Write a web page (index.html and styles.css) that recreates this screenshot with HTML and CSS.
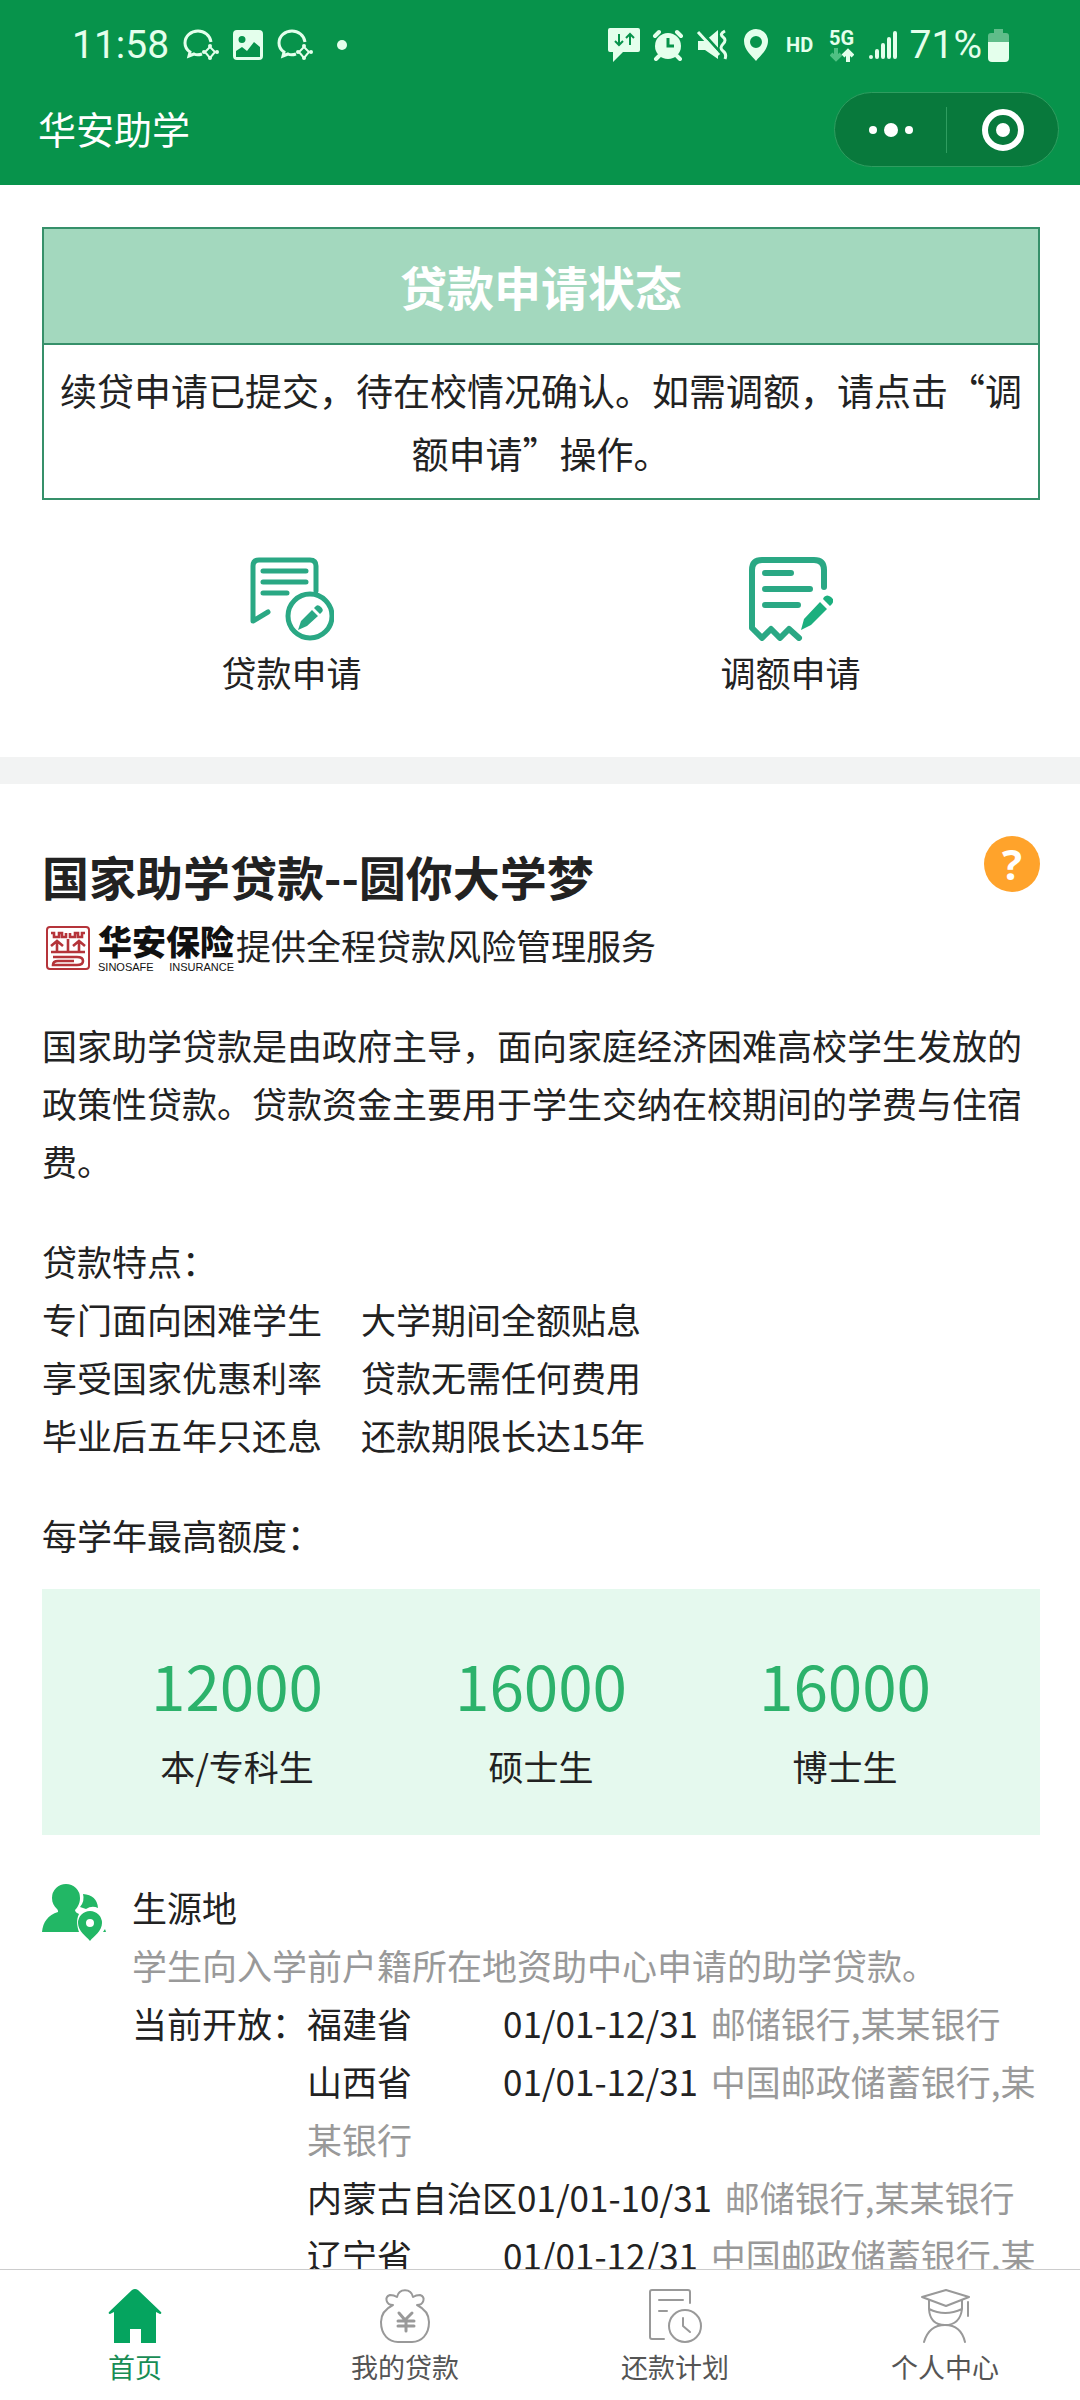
FILE: index.html
```html
<!doctype html>
<html lang="zh-CN">
    <head>
        <meta charset="utf-8">
        <title>华安助学</title>
        <meta name="viewport" content="width=device-width, initial-scale=1">

        <link rel="stylesheet" href="styles.css">
    </head>
    <body>
        <header class="header">
            <div class="status">
                <div class="status-left">
                    <span class="clock">11:58</span>
                    <svg class="bubble" width="36" height="32" viewBox="0 0 36 32" fill="none" stroke="currentColor" stroke-width="3">
                        <path d="M28 13C27 6 21 2 15 2 8 2 2 7 2 14c0 4 2 7 5 9l-1 4 5-2c2 1 5 1 8 0"/>
                        <path d="M27 18l5 5-5 6-5-6z" stroke-width="2"/>
                        <g fill="currentColor" stroke="none"><circle cx="27" cy="17" r="2"/><circle cx="34" cy="23" r="2"/><circle cx="27" cy="29" r="2"/><circle cx="21" cy="23" r="2"/></g>
                    </svg>
                    <svg width="30" height="30" viewBox="0 0 30 30">
                        <path fill="currentColor" fill-rule="evenodd" d="M4 0h22a4 4 0 0 1 4 4v22a4 4 0 0 1-4 4H4a4 4 0 0 1-4-4V4a4 4 0 0 1 4-4zM9 6a3 3 0 1 0 0 7 3 3 0 0 0 0-7zM3 21v6h24V17l-6-5-7 9-5-4z"/>
                    </svg>
                    <svg class="bubble" width="36" height="32" viewBox="0 0 36 32" fill="none" stroke="currentColor" stroke-width="3">
                        <path d="M28 13C27 6 21 2 15 2 8 2 2 7 2 14c0 4 2 7 5 9l-1 4 5-2c2 1 5 1 8 0"/>
                        <path d="M27 18l5 5-5 6-5-6z" stroke-width="2"/>
                        <g fill="currentColor" stroke="none"><circle cx="27" cy="17" r="2"/><circle cx="34" cy="23" r="2"/><circle cx="27" cy="29" r="2"/><circle cx="21" cy="23" r="2"/></g>
                    </svg>
                    <span class="more-dot"></span>
                </div>
                <div class="status-right">
                    <svg width="32" height="34" viewBox="0 0 32 34">
                        <path fill="currentColor" d="M2 0h28a2 2 0 0 1 2 2v20a2 2 0 0 1-2 2H15L5 34V24H2a2 2 0 0 1-2-2V2a2 2 0 0 1 2-2z"/>
                        <path fill="none" stroke="#07934b" stroke-width="2" d="M11 6v11M7 13l4 4 4-4M22 17V6m-4 4l4-4 4 4"/>
                    </svg>
                    <svg width="32" height="32" viewBox="0 0 32 32">
                        <circle cx="16" cy="17" r="13" fill="currentColor"/>
                        <path fill="none" stroke="currentColor" stroke-width="4" stroke-linecap="round" d="M3 7l4-4M29 7l-4-4M7 27l-3 3M25 27l3 3"/>
                        <path fill="none" stroke="#07934b" stroke-width="3" d="M16 9v8h6"/>
                    </svg>
                    <svg width="32" height="32" viewBox="0 0 32 32">
                        <path fill="currentColor" d="M2 12h7L22 1v29L9 21H2z"/>
                        <path stroke="#07934b" stroke-width="3" d="M4 1l19 21"/>
                        <path stroke="currentColor" stroke-width="3" d="M2 3l21 23"/>
                        <path fill="none" stroke="currentColor" stroke-width="3" d="M29 2q-6 3-2 6t0 7 0 7 2 8"/>
                    </svg>
                    <svg width="32" height="32" viewBox="0 0 32 32">
                        <path fill="currentColor" fill-rule="evenodd" d="M16 0a12 12 0 0 1 12 12c0 9-8 15-12 20C12 27 4 21 4 12A12 12 0 0 1 16 0zm0 7a6 6 0 1 0 0 12 6 6 0 0 0 0-12z"/>
                    </svg>
                    <span class="hd">HD</span>
                    <span class="network">
                        5G
                        <svg width="24" height="14" viewBox="0 0 24 14" fill="none" stroke-width="4">
                            <path stroke="#4fc083" d="M6 0v11M1 6l5 5 5-5"/>
                            <path stroke="currentColor" d="M18 14V3m-5 5l5-5 5 5"/>
                        </svg>
                    </span>
                    <svg width="30" height="28" viewBox="0 0 30 28" stroke="currentColor" stroke-width="4" stroke-linecap="round">
                        <path d="M3 26v0M9 20v6M15 14v12M21 8v18M27 2v24"/>
                    </svg>
                    <span class="battery">
                        71%
                        <svg width="21" height="33" viewBox="0 0 21 33">
                            <path fill="#5fbd8a" d="M6 0h9v4h3a3 3 0 0 1 3 3v7H0V7a3 3 0 0 1 3-3h3z"/>
                            <path fill="currentColor" d="M0 13h21v16a4 4 0 0 1-4 4H4a4 4 0 0 1-4-4z"/>
                        </svg>
                    </span>
                </div>
            </div>
            <div class="titlebar">
                <h1 class="app-title">华安助学</h1>
                <div class="capsule">
                    <button type="button" class="capsule-button" aria-label="更多">
                        <svg width="46" height="16" viewBox="0 0 46 16" fill="#fff">
                            <circle cx="5" cy="8" r="4"/><circle cx="23" cy="8" r="7"/><circle cx="41" cy="8" r="4"/>
                        </svg>
                    </button>
                    <button type="button" class="capsule-button" aria-label="关闭">
                        <svg width="42" height="42" viewBox="0 0 42 42">
                            <circle cx="21" cy="21" r="18" fill="none" stroke="#fff" stroke-width="6"/>
                            <circle cx="21" cy="21" r="7" fill="#fff"/>
                        </svg>
                    </button>
                </div>
            </div>
        </header>

        <main class="content">
            <section class="apply">
                <div class="card">
                    <h2 class="card-title">贷款申请状态</h2>
                    <p class="card-text">续贷申请已提交，待在校情况确认。如需调额，请点击“调额申请”操作。</p>
                </div>
                <div class="actions">
                    <a class="action" href="#loan">
                        <svg width="84" height="84" viewBox="0 0 84 84" fill="none" stroke="#2aa884" stroke-width="5" stroke-linecap="round" stroke-linejoin="round">
                            <path d="M66 34V9q0-6-6-6H9Q3 3 3 9v55l15-9"/>
                            <path d="M13 14h43M13 25h43M13 36h24"/>
                            <circle cx="60" cy="59" r="22"/>
                            <path fill="#2aa884" stroke="none" d="M48 73l3-9 11-11 6 6-11 10zM64 51l2-2q2-2 5 1t1 5l-2 2z"/>
                        </svg>
                        贷款申请
                    </a>
                    <a class="action" href="#adjust">
                        <svg width="84" height="84" viewBox="0 0 84 84" fill="none" stroke="#2aa884" stroke-width="6" stroke-linecap="round" stroke-linejoin="round">
                            <path d="M75 30V13Q75 3 65 3H13Q3 3 3 13v58l10 10 9-9 9 9 9-9 10 9"/>
                            <path d="M16 16h26M16 32h45M16 48h33"/>
                            <path fill="#1caf7e" stroke="none" d="M52 73l3-11 16-17 7 7-16 16zM74 42l1-2q3-3 7 0t1 7l-2 2z"/>
                        </svg>
                        调额申请
                    </a>
                </div>
            </section>

            <section class="intro">
                <div class="intro-head">
                    <h2 class="intro-title">国家助学贷款--圆你大学梦</h2>
                    <button type="button" class="help" aria-label="帮助">?</button>
                </div>
                <div class="provider">
                    <svg class="seal" width="44" height="44" viewBox="0 0 44 44" fill="none" stroke="#b5343a" stroke-width="2">
                        <rect x="1" y="1" width="42" height="42" rx="3"/>
                        <g stroke-width="2.6">
                            <path d="M5 7h3v4h5V7h3v4h4V7M24 7v4h5V7h3v4h4V7h3"/>
                            <path d="M22 13v13M5 20l6-5 6 5M11 16v9M27 20l6-5 6 5M33 16v9M5 26h34"/>
                            <path d="M7 31h24q6 0 6 4t-6 4H7q0-4 5-4h16"/>
                        </g>
                    </svg>
                    <span class="brand">
                        <span class="brand-name">华安保险</span>
                        <span class="brand-en"><span>SINOSAFE</span><span>INSURANCE</span></span>
                    </span>
                    <span>提供全程贷款风险管理服务</span>
                </div>
                <p class="text">国家助学贷款是由政府主导，面向家庭经济困难高校学生发放的政策性贷款。贷款资金主要用于学生交纳在校期间的学费与住宿费。</p>
                <div class="text">
                    贷款特点：
                    <ul class="features">
                        <li>专门面向困难学生</li>
                        <li>大学期间全额贴息</li>
                        <li>享受国家优惠利率</li>
                        <li>贷款无需任何费用</li>
                        <li>毕业后五年只还息</li>
                        <li>还款期限长达15年</li>
                    </ul>
                </div>
                <p class="text">每学年最高额度：</p>
                <div class="quota">
                    <div class="quota-item"><strong class="amount">12000</strong>本/专科生</div>
                    <div class="quota-item"><strong class="amount">16000</strong>硕士生</div>
                    <div class="quota-item"><strong class="amount">16000</strong>博士生</div>
                </div>

                <div class="origin">
                    <svg class="origin-icon" width="64" height="60" viewBox="0 0 64 60" fill="#22b765">
                        <path d="M41 10q14 1 15 14-6-3-12 1l-6-2q5-6 3-13z"/>
                        <path d="M24 0a14 14 0 0 1 14 14c0 6-3 10-5 12 0 2 2 3 4 4-3 6-2 12 0 18H0c1-10 6-17 16-20 0-1 0-2-1-3-3-3-5-6-5-11A14 14 0 0 1 24 0z"/>
                        <path fill-rule="evenodd" d="M48 27a12 12 0 0 1 12 12c0 8-8 13-12 18-4-5-12-10-12-18a12 12 0 0 1 12-12zm0 8a4 4 0 1 0 0 8 4 4 0 0 0 0-8zM63 45l1 3h-3z"/>
                    </svg>
                    <div class="origin-body">
                        <h3 class="origin-title">生源地</h3>
                        <p class="muted">学生向入学前户籍所在地资助中心申请的助学贷款。</p>
                        <div class="open">
                            <span>当前开放：</span>
                            <ul class="provinces">
                                <li><span class="province">福建省</span>01/01-12/31 <span class="muted bank">邮储银行,某某银行</span></li>
                                <li><span class="province">山西省</span>01/01-12/31 <span class="muted bank">中国邮政储蓄银行,某某银行</span></li>
                                <li><span class="province">内蒙古自治区</span>01/01-10/31 <span class="muted bank">邮储银行,某某银行</span></li>
                                <li><span class="province">辽宁省</span>01/01-12/31 <span class="muted bank">中国邮政储蓄银行,某某银行</span></li>
                            </ul>
                        </div>
                    </div>
                </div>
            </section>
        </main>

        <nav class="tabbar">
            <a class="tab active" href="#home">
                <svg width="54" height="54" viewBox="0 0 54 54" fill="#05a45f">
                    <path d="M24 1q3-2 6 0l23 22q1 2-1 2l-4-2v31H33V40H22v14H6V23l-4 2q-2 0-1-2z"/>
                </svg>
                首页
            </a>
            <a class="tab" href="#loans">
                <svg width="54" height="54" viewBox="0 0 54 54" fill="none" stroke="#999" stroke-width="2" stroke-linecap="round" stroke-linejoin="round">
                    <path d="M15 16C7 20 3 26 3 33c0 13 8 20 17 20h14c9 0 17-7 17-20 0-7-4-13-12-17 7 0 9-8 3-10q-4 0-7 2C33-1 21-1 19 8q-3-2-7-2c-6 2-4 10 3 10z"/>
                    <path stroke-width="3" d="M21 24l6 7 7-7M20 32h16M20 37h16M28 31v11"/>
                </svg>
                我的贷款
            </a>
            <a class="tab" href="#plan">
                <svg width="54" height="54" viewBox="0 0 54 54" fill="none" stroke="#999" stroke-width="2" stroke-linecap="round" stroke-linejoin="round">
                    <path d="M42 14V3q0-2-2-2H4Q2 1 2 3v45q0 2 2 2h12M11 11h24M11 22h8"/>
                    <circle cx="37" cy="37" r="16"/>
                    <path d="M35 29v8l7 6"/>
                </svg>
                还款计划
            </a>
            <a class="tab" href="#me">
                <svg width="54" height="54" viewBox="0 0 54 54" fill="none" stroke="#999" stroke-width="2" stroke-linecap="round" stroke-linejoin="round">
                    <path d="M4 8l24-7 23 7-23 9zM11 11v9q1 16 16 16t17-16v-9M11 20q16 8 33 0M50 13v14M6 53Q11 36 27 36t20 17"/>
                </svg>
                个人中心
            </a>
        </nav>
    </body>
</html>
```

FILE: styles.css
```css
* {
    box-sizing: border-box;
}

body {
    display: flex;
    flex-direction: column;
    height: 100vh;
    margin: 0;
    background-color: #fff;
    color: #222;
    font-family: "Noto Sans CJK SC", sans-serif;
    font-size: 35px;
    line-height: 58px;
}

h1, h2, h3, p, ul {
    margin: 0;
    padding: 0;
    font-size: inherit;
    font-weight: normal;
}

ul {
    list-style: none;
}

a {
    color: inherit;
    text-decoration: none;
}

button {
    border: 0;
    padding: 0;
    background: none;
}

svg {
    display: block;
    flex: none;
}

/* Header */
.header {
    flex: none;
    padding-bottom: 18px;
    background-color: #07934b;
    color: #e4ffec;
}

.status {
    display: flex;
    justify-content: space-between;
    height: 92px;
    padding: 0 71px 2px 72px;
    font-family: Roboto, sans-serif;
    font-size: 39px;
    line-height: 40px;
}

.status-left,
.status-right {
    display: flex;
    align-items: center;
    gap: 14px;
}

.status-right {
    gap: 12px;
}

.more-dot {
    width: 10px;
    height: 10px;
    margin-left: 10px;
    border-radius: 50%;
    background-color: currentColor;
}

.hd {
    width: 32px;
    font-size: 20px;
    font-weight: bold;
    text-align: center;
}

.network {
    display: flex;
    flex-direction: column;
    align-items: center;
    width: 28px;
    font-size: 20px;
    font-weight: bold;
    line-height: 20px;
}

.battery {
    display: flex;
    align-items: center;
    gap: 6px;
}

.titlebar {
    display: flex;
    align-items: center;
    justify-content: space-between;
    padding: 0 21px 0 38px;
}

.app-title {
    padding-bottom: 4px;
    color: #fff;
    font-size: 38px;
}

.capsule {
    display: flex;
    align-items: center;
    width: 225px;
    height: 75px;
    border: 1px solid #2f9d60;
    border-radius: 38px;
    background-color: #08793c;
}

.capsule-button {
    display: flex;
    flex: 1;
    align-items: center;
    justify-content: center;
    height: 46px;
}

.capsule-button + .capsule-button {
    border-left: 1px solid #2f9d60;
}

/* Scrolling page */
.content {
    flex: 1;
    min-height: 0;
    overflow: hidden;
}

.apply {
    padding: 42px 40px 56px 42px;
    border-bottom: 27px solid #f2f3f3;
}

.card {
    border: 2px solid #36906a;
    text-align: center;
}

.card-title {
    border-bottom: 2px solid #36906a;
    background-color: #a3d8be;
    color: #fff;
    font-size: 47px;
    font-weight: bold;
    line-height: 114px;
}

.card-text {
    padding: 14px 8px 13px;
    font-size: 37px;
    line-height: 63px;
}

.actions {
    display: flex;
    margin-top: 57px;
}

.action {
    display: flex;
    flex: 1;
    flex-direction: column;
    align-items: center;
    gap: 2px;
}

.intro {
    padding: 52px 40px 0 42px;
}

.intro-head {
    display: flex;
    align-items: flex-start;
    justify-content: space-between;
}

.intro-title {
    font-size: 47px;
    font-weight: bold;
    line-height: 80px;
}

.help {
    width: 56px;
    height: 56px;
    border-radius: 50%;
    background-color: #ffa32b;
    color: #fff;
    font-family: "Open Sans", sans-serif;
    font-size: 42px;
    font-weight: bold;
    line-height: 56px;
}

.provider {
    display: flex;
    align-items: center;
    height: 58px;
}

.seal {
    margin: 6px 8px 0 4px;
}

.brand {
    margin-right: 2px;
    padding-top: 4px;
    color: #111;
}

.brand-name {
    display: block;
    font-size: 34px;
    font-weight: 900;
    line-height: 40px;
}

.brand-en {
    display: flex;
    justify-content: space-between;
    font-family: "Liberation Sans", sans-serif;
    font-size: 11px;
    line-height: 12px;
}

.text {
    margin-top: 42px;
}

.features {
    display: grid;
    grid-template-columns: max-content max-content;
    column-gap: 39px;
}

.quota {
    display: flex;
    margin-top: 25px;
    padding: 50px 43px 40px;
    background-color: #e5f9ee;
}

.quota-item {
    flex: 1;
    text-align: center;
}

.amount {
    display: block;
    margin-bottom: 8px;
    color: #2cb26b;
    font-size: 62px;
    font-weight: normal;
    line-height: 90px;
}

.origin {
    display: flex;
    gap: 26px;
    margin-top: 43px;
}

.origin-icon {
    margin-top: 6px;
}

.muted {
    color: #999;
}

.open {
    display: flex;
}

.open > span {
    flex: none;
}

.province {
    display: inline-block;
    min-width: 196px;
}

.bank {
    margin-left: 5px;
}

/* Bottom navigation */
.tabbar {
    display: flex;
    flex: none;
    height: 131px;
    padding-top: 19px;
    border-top: 1px solid #ccc;
    background-color: #fff;
    color: #555;
    font-size: 27px;
    line-height: 48px;
}

.tab {
    display: flex;
    flex: 1;
    flex-direction: column;
    align-items: center;
}

.tab.active {
    color: #188d55;
}
```
